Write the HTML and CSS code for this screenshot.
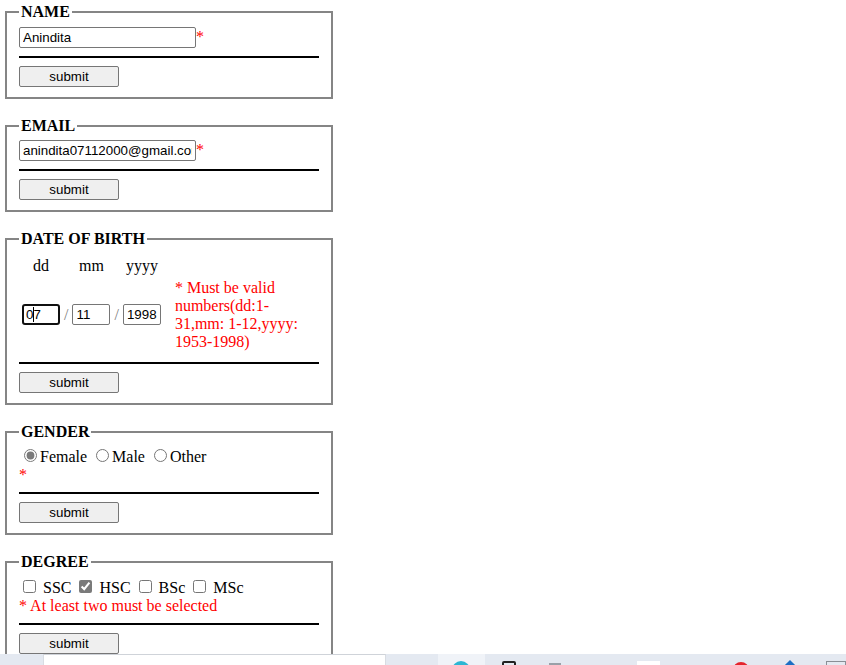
FILE: index.html
```html
<!DOCTYPE html>
<html>
<head>
<meta charset="utf-8">
<link rel="stylesheet" href="styles.css">
</head>
<body>
<form class="form">
  <fieldset class="box">
    <legend class="title">NAME</legend>
    <div class="line"><input type="text" class="field" value="Anindita"><span class="req">*</span></div>
    <hr class="rule">
    <button type="button" class="btn">submit</button>
  </fieldset>

  <fieldset class="box">
    <legend class="title">EMAIL</legend>
    <div class="line"><input type="text" class="field" value="anindita07112000@gmail.com"><span class="req">*</span></div>
    <hr class="rule">
    <button type="button" class="btn">submit</button>
  </fieldset>

  <fieldset class="box">
    <legend class="title">DATE OF BIRTH</legend>
    <table class="dob">
      <tr>
        <td class="head">dd</td><td></td>
        <td class="head">mm</td><td></td>
        <td class="head">yyyy</td><td></td>
      </tr>
      <tr>
        <td><span class="caret-wrap"><input type="text" class="num focused" value="07"><span class="caret"></span></span></td>
        <td class="slash">/</td>
        <td><input type="text" class="num" value="11"></td>
        <td class="slash">/</td>
        <td><input type="text" class="num" value="1998"></td>
        <td class="msg">* Must be valid numbers(dd:1-31,mm: 1-12,yyyy: 1953-1998)</td>
      </tr>
    </table>
    <hr class="rule">
    <button type="button" class="btn">submit</button>
  </fieldset>

  <fieldset class="box">
    <legend class="title">GENDER</legend>
    <div class="line"><input type="radio" name="g" class="radio" checked>Female <input type="radio" name="g" class="radio">Male <input type="radio" name="g" class="radio">Other</div>
    <div class="line req">*</div>
    <hr class="rule">
    <button type="button" class="btn">submit</button>
  </fieldset>

  <fieldset class="box">
    <legend class="title">DEGREE</legend>
    <div class="line"><input type="checkbox" class="check"> SSC <input type="checkbox" class="check" checked> HSC <input type="checkbox" class="check"> BSc <input type="checkbox" class="check"> MSc</div>
    <div class="line req">* At least two must be selected</div>
    <hr class="rule">
    <button type="button" class="btn">submit</button>
  </fieldset>
</form>

<div class="taskbar">
  <div class="search"></div>
  <div class="tile"></div>
  <span class="ti ti-edge"></span>
  <span class="ti ti-dark"></span>
  <span class="ti ti-gray"></span>
  <span class="ti ti-white"></span>
  <span class="ti ti-red"></span>
  <span class="ti ti-blue"></span>
  <span class="ti ti-box"></span>
</div>
</body>
</html>
```

FILE: styles.css
```css
html, body {
  margin: 0;
  padding: 0;
  background: #ffffff;
}

body {
  font-family: "Liberation Serif", "Times New Roman", serif;
  font-size: 16px;
  color: #000;
}

.form {
  padding: 3px 0 0 3px;
}

.box {
  width: 300px;
  margin: 0 2px 18px 2px;
  padding: 5.6px 12px 10px 12px;
  border: 2px solid #858585;
}

.title {
  font-weight: bold;
  padding: 0 2px;
  font-size: 16px;
}

.line {
  line-height: normal;
}

.field {
  box-sizing: border-box;
  width: 177px;
  height: 21px;
  margin: 0;
  padding: 1px 3px;
  border: 1px solid #767676;
  border-radius: 2px;
  font-family: "Liberation Sans", Arial, sans-serif;
  font-size: 13.33px;
  color: #000;
  background: #fff;
}

.req {
  color: #ff0000;
}

.rule {
  margin: 8px 0;
  height: 0;
  border: 1px solid #000;
}

.btn {
  display: block;
  box-sizing: border-box;
  width: 100px;
  height: 21px;
  margin: 0;
  padding: 1px 6px;
  border: 1px solid #767676;
  border-radius: 2px;
  background: #efefef;
  font-family: "Liberation Sans", Arial, sans-serif;
  font-size: 13.33px;
  color: #000;
}

.dob {
  border-spacing: 2px;
  font-size: 16px;
}

.dob td {
  padding: 1px;
}

.dob .head {
  text-align: center;
}

.dob .slash {
  color: #808080;
}

.dob .msg {
  color: #ff0000;
  padding-left: 11px;
}

.num {
  box-sizing: border-box;
  width: 38px;
  height: 21px;
  margin: 0;
  padding: 1px 3px;
  border: 1px solid #767676;
  border-radius: 2px;
  font-family: "Liberation Sans", Arial, sans-serif;
  font-size: 13.33px;
  color: #000;
  background: #fff;
  vertical-align: middle;
}

.num.focused {
  border: 2px solid #101010;
  border-radius: 3px;
  padding: 0 2px;
}

.caret-wrap {
  position: relative;
  display: inline-block;
}

.caret {
  position: absolute;
  left: 11px;
  top: 3px;
  width: 1px;
  height: 15px;
  background: #000;
}

.radio {
  accent-color: #7a7a7a;
  margin: 3px 3px 0 5px;
}

.check {
  accent-color: #7a7a7a;
  margin: 3px 3px 3px 4px;
}

.taskbar {
  position: fixed;
  left: 0;
  right: 0;
  bottom: 0;
  height: 11px;
  background: #e4e9f1;
  overflow: hidden;
}

.search {
  position: absolute;
  left: 43px;
  top: 0;
  width: 343px;
  height: 11px;
  background: #fff;
  border-top: 1px solid #cfd3d9;
  border-left: 1px solid #d8dce2;
  border-right: 1px solid #d8dce2;
  box-sizing: border-box;
}

.tile {
  position: absolute;
  left: 438px;
  top: 0;
  width: 47px;
  height: 11px;
  background: #f0f3f8;
}

.ti {
  position: absolute;
  display: block;
}

.ti-edge {
  left: 452px;
  top: 7px;
  width: 18px;
  height: 18px;
  border-radius: 50%;
  background: #2bb6d3;
}

.ti-dark {
  left: 502px;
  top: 7px;
  width: 10px;
  height: 10px;
  border: 2px solid #222;
  border-radius: 2px;
}

.ti-gray {
  left: 549px;
  top: 9px;
  width: 12px;
  height: 6px;
  border-top: 2px solid #9aa0a8;
}

.ti-white {
  left: 637px;
  top: 7px;
  width: 23px;
  height: 8px;
  background: #ffffff;
}

.ti-red {
  left: 733px;
  top: 8px;
  width: 16px;
  height: 16px;
  border-radius: 50%;
  background: #e4252d;
}

.ti-blue {
  left: 785px;
  top: 8px;
  width: 10px;
  height: 10px;
  background: #1d6fc4;
  transform: rotate(45deg);
}

.ti-box {
  left: 826px;
  top: 7px;
  width: 18px;
  height: 10px;
  border: 1px solid #8a8f96;
}
```
